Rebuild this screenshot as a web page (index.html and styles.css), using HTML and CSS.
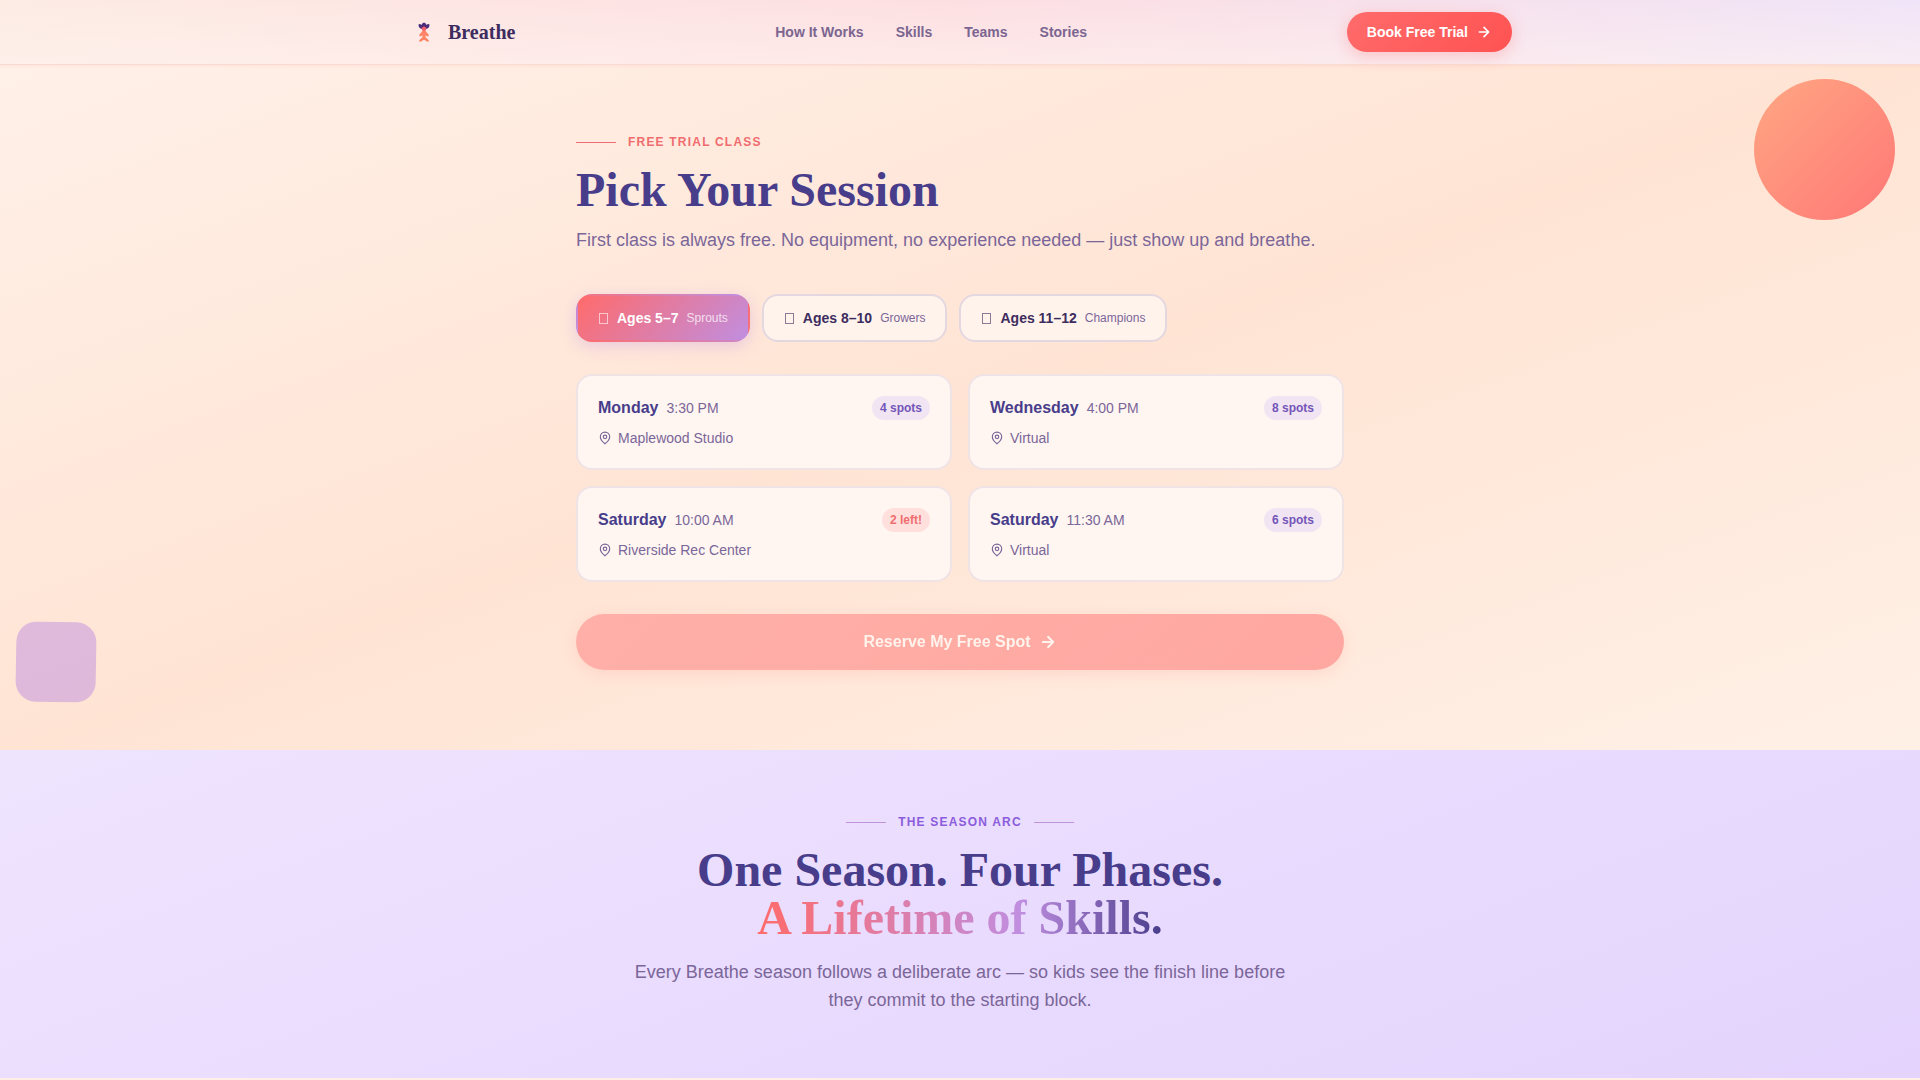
FILE: index.html
```
<!DOCTYPE html>
<html lang="en">
<head>
    <meta charset="UTF-8">
    <meta name="viewport" content="width=device-width, initial-scale=1.0">
    <title>Breathe | Book a Free Trial</title>
    <link rel="stylesheet" href="styles.css">
</head>
<body>
    <header class="nav">
        <div class="nav-inner">
            <a href="#" class="logo">
                <svg class="logo-icon" viewBox="0 0 32 32" aria-hidden="true">
                    <path d="M10.5 8.5q1.5-1 3 .5q.3-1.800 2.500-2.500q2.200.7 2.500 2.500q1.500-1.500 3-.5q0 3.500-3 4.500h-5q-3-1-3-4.500z" fill="#4a2c7a"/>
                    <path d="M13.500 12q2.500-3 5 0l-1.200 3.500h-2.600z" fill="#f2606e"/>
                    <path d="M15 14.500h2l4 4.500-1 1.500-2.500-1v1.500l3.500 3.500-1 1.500-4-2.200-4 2.200-1-1.500 3.500-3.500v-1.500l-2.500 1-1-1.500z" fill="#ff8566"/>
                </svg>
                <span>Breathe</span>
            </a>
            <nav class="nav-links">
                <a href="#how">How It Works</a>
                <a href="#skills">Skills</a>
                <a href="#teams">Teams</a>
                <a href="#stories">Stories</a>
            </nav>
            <a href="#booking" class="btn btn-small">
                Book Free Trial
                <svg class="arrow" viewBox="0 0 24 24" aria-hidden="true"><path d="M5 12h14M12 5l7 7-7 7"/></svg>
            </a>
        </div>
    </header>

    <section class="booking" id="booking">
        <div class="shape shape-circle"></div>
        <div class="shape shape-square"></div>
        <div class="booking-inner">
            <p class="eyebrow">Free Trial Class</p>
            <h1>Pick Your Session</h1>
            <p class="lead">First class is always free. No equipment, no experience needed — just show up and breathe.</p>

            <div class="tabs">
                <button type="button" class="tab active"><span class="tab-icon"></span>Ages 5–7 <small>Sprouts</small></button>
                <button type="button" class="tab"><span class="tab-icon"></span>Ages 8–10 <small>Growers</small></button>
                <button type="button" class="tab"><span class="tab-icon"></span>Ages 11–12 <small>Champions</small></button>
            </div>

            <div class="sessions">
                <button type="button" class="session">
                    <span class="session-top"><strong>Monday</strong><span>3:30 PM</span><span class="badge">4 spots</span></span>
                    <span class="place"><svg class="pin" viewBox="0 0 24 24" aria-hidden="true"><path d="M20 10c0 6-8 12-8 12s-8-6-8-12a8 8 0 0 1 16 0z"/><circle cx="12" cy="10" r="3"/></svg>Maplewood Studio</span>
                </button>
                <button type="button" class="session">
                    <span class="session-top"><strong>Wednesday</strong><span>4:00 PM</span><span class="badge">8 spots</span></span>
                    <span class="place"><svg class="pin" viewBox="0 0 24 24" aria-hidden="true"><path d="M20 10c0 6-8 12-8 12s-8-6-8-12a8 8 0 0 1 16 0z"/><circle cx="12" cy="10" r="3"/></svg>Virtual</span>
                </button>
                <button type="button" class="session">
                    <span class="session-top"><strong>Saturday</strong><span>10:00 AM</span><span class="badge low">2 left!</span></span>
                    <span class="place"><svg class="pin" viewBox="0 0 24 24" aria-hidden="true"><path d="M20 10c0 6-8 12-8 12s-8-6-8-12a8 8 0 0 1 16 0z"/><circle cx="12" cy="10" r="3"/></svg>Riverside Rec Center</span>
                </button>
                <button type="button" class="session">
                    <span class="session-top"><strong>Saturday</strong><span>11:30 AM</span><span class="badge">6 spots</span></span>
                    <span class="place"><svg class="pin" viewBox="0 0 24 24" aria-hidden="true"><path d="M20 10c0 6-8 12-8 12s-8-6-8-12a8 8 0 0 1 16 0z"/><circle cx="12" cy="10" r="3"/></svg>Virtual</span>
                </button>
            </div>

            <button type="button" class="btn btn-large" disabled>
                Reserve My Free Spot
                <svg class="arrow" viewBox="0 0 24 24" aria-hidden="true"><path d="M5 12h14M12 5l7 7-7 7"/></svg>
            </button>
        </div>
    </section>

    <section class="season" id="how">
        <p class="eyebrow eyebrow-center">The Season Arc</p>
        <h2>One Season. Four Phases.<br><span class="gradient-text">A Lifetime of Skills.</span></h2>
        <p class="lead">Every Breathe season follows a deliberate arc — so kids see the finish line before they commit to the starting block.</p>
    </section>
</body>
</html>
```
FILE: styles.css
```
* { box-sizing: border-box; margin: 0; padding: 0; }
body { font-family: "Liberation Sans", Arial, sans-serif; background: #fff0e6; color: #3d2c5e; overflow-x: hidden; }
a { color: inherit; text-decoration: none; }
button { font-family: inherit; cursor: pointer; }

/* nav */
.nav { background: linear-gradient(to bottom, rgba(255, 240, 230, 0) 0%, rgba(255, 244, 240, 0.5) 100%), linear-gradient(to right, #fdebe4 0%, #fddfe2 50%, #f0e4f8 100%); border-bottom: 1px solid #f8dcd4; box-shadow: 0 1px 3px rgba(255, 107, 107, 0.1); position: relative; z-index: 2; }
.nav-inner { max-width: 1200px; height: 64px; margin: 0 auto; padding: 0 48px; display: flex; align-items: center; justify-content: space-between; }
.logo { display: flex; align-items: center; gap: 8px; font-family: "Liberation Serif", "Times New Roman", serif; font-size: 20px; font-weight: bold; color: #3d2c5e; }
.logo-icon { width: 32px; height: 32px; }
.nav-links { display: flex; gap: 32px; font-size: 14px; font-weight: bold; color: #7b6590; }

/* buttons */
.btn { display: flex; align-items: center; justify-content: center; gap: 8px; border: none; border-radius: 999px; font-weight: bold; color: #fff; background: linear-gradient(135deg, #ff6b6b, #ff5252); box-shadow: 0 4px 16px rgba(255, 107, 107, 0.3); }
.btn-small { height: 40px; padding: 0 20px; font-size: 14px; }
.btn-large { width: 100%; height: 56px; font-size: 16px; margin-top: 32px; background: linear-gradient(135deg, #ff7b7b, #ff6666); }
.btn:disabled { opacity: 0.5; cursor: not-allowed; }
.arrow { width: 16px; height: 16px; fill: none; stroke: currentColor; stroke-width: 2.5; stroke-linecap: round; stroke-linejoin: round; }
.btn-large .arrow { width: 18px; height: 18px; }

/* booking */
.booking { position: relative; padding: 69px 24px 80px; background: linear-gradient(160deg, #fff0e8 0%, #ffe4d4 50%, #fff0e6 100%); }
.booking-inner { max-width: 768px; margin: 0 auto; }
.shape { position: absolute; }
.shape-circle { top: 14px; right: 25px; width: 141px; height: 141px; border-radius: 50%; background: linear-gradient(135deg, #ffa07a, #ff6b6b); opacity: 0.9; }
.shape-square { left: 16px; bottom: 48px; width: 80px; height: 80px; border-radius: 20px; background: #c08ee0; opacity: 0.5; transform: rotate(1deg); }

.eyebrow { display: flex; align-items: center; gap: 12px; font-size: 12px; line-height: 16px; font-weight: bold; letter-spacing: 0.1em; text-transform: uppercase; color: #f06c6e; margin-bottom: 16px; }
.eyebrow::before, .eyebrow-center::after { content: ""; width: 40px; height: 1px; background: currentColor; }
.eyebrow-center { justify-content: center; color: #8b5cdc; }
.eyebrow-center::before, .eyebrow-center::after { background: #bf94d8; }
h1, h2 { font-family: "Liberation Serif", "Times New Roman", serif; font-size: 48px; line-height: 48px; font-weight: bold; color: #483d8b; }
.lead { font-size: 18px; line-height: 28px; color: #7b6699; margin-top: 12px; }

.tabs { display: flex; flex-wrap: wrap; gap: 12px; margin: 40px 0 32px; }
.tab { display: flex; align-items: center; gap: 8px; height: 48px; padding: 0 20px; border: 2px solid #e4d8e0; border-radius: 16px; background: #fff3ec; font-size: 14px; font-weight: bold; color: #3d2c5e; }
.tab small { font-size: 12px; font-weight: normal; color: #7b6699; }
.tab-icon { width: 9px; height: 11px; border: 1px solid currentColor; opacity: 0.6; margin: 0 1px; }
.tab.active { border-color: transparent; background: linear-gradient(135deg, #ff6b6b, #c08ee0); color: #fff; box-shadow: 0 4px 16px rgba(192, 142, 224, 0.35); }
.tab.active small { color: rgba(255, 255, 255, 0.75); }

.sessions { display: grid; grid-template-columns: repeat(auto-fit, minmax(300px, 1fr)); gap: 16px; }
.session { display: flex; flex-direction: column; gap: 8px; padding: 20px; border: 2px solid #efe3e6; border-radius: 16px; background: #fff6f1; text-align: left; font-size: 14px; color: #7b6699; }
.session-top { display: flex; align-items: center; gap: 8px; line-height: 24px; }
.session strong { font-size: 16px; color: #483d8b; }
.badge { margin-left: auto; padding: 0 8px; border-radius: 12px; background: #f2e5f3; color: #7355b8; font-size: 12px; font-weight: bold; }
.badge.low { background: #ffe0dc; color: #ee6e70; }
.place { display: flex; align-items: center; gap: 6px; line-height: 20px; }
.pin { width: 14px; height: 14px; fill: none; stroke: currentColor; stroke-width: 2; }

/* season */
.season { padding: 64px 24px; text-align: center; background: linear-gradient(160deg, #efe4fe 0%, #e8dafe 60%, #e4d4fd 100%); }
.gradient-text { background: linear-gradient(90deg, #ff6b6b, #c08ee0 65%, #483d8b); -webkit-background-clip: text; background-clip: text; color: transparent; }
.season .lead { max-width: 672px; margin: 16px auto 0; }
```
